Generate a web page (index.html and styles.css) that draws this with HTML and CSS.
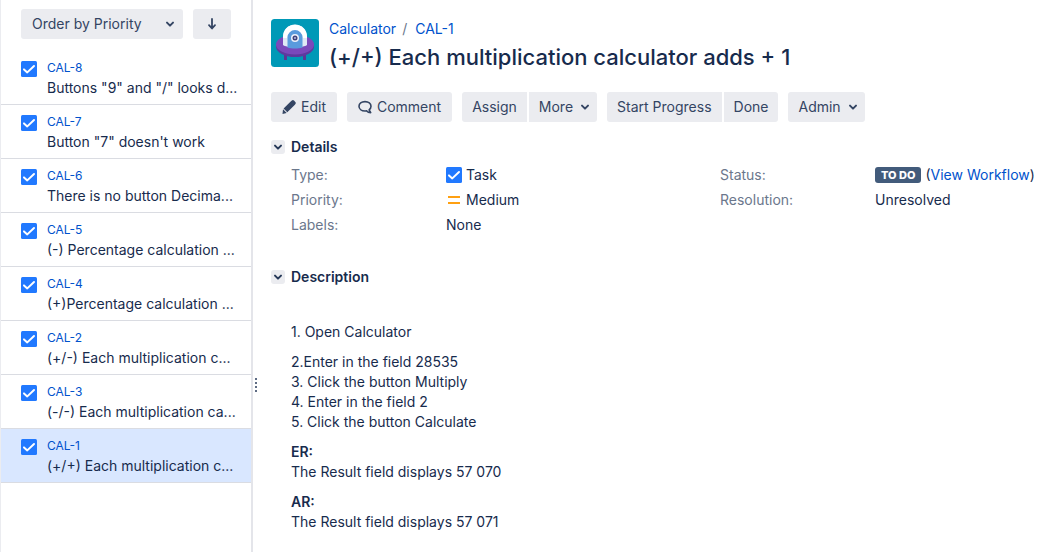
FILE: index.html
```
<!DOCTYPE html>
<html lang="en">
<head>
<meta charset="utf-8">
<title>CAL-1 (+/+) Each multiplication calculator adds + 1</title>
<link rel="stylesheet" href="styles.css">
</head>
<body>
<svg class="sprite" aria-hidden="true">
  <symbol id="task" viewBox="0 0 16 16"><rect width="16" height="16" rx="1.5" fill="#2179ff"/><path d="M3 8.400l3.300 3L13 5" fill="none" stroke="#fff" stroke-width="2" stroke-linecap="round" stroke-linejoin="round"/></symbol>
  <symbol id="chevron" viewBox="0 0 10 10"><path d="M2 3.600l3 3 3-3" fill="none" stroke="currentColor" stroke-width="2" stroke-linecap="round" stroke-linejoin="round"/></symbol>
</svg>
<div class="layout">
  <aside class="sidebar">
    <div class="order">
      <button class="btn order-by">Order by Priority<svg class="chevron"><use href="#chevron"/></svg></button>
      <button class="btn order-dir" aria-label="Sort descending"><svg class="arrow" viewBox="0 0 12 12"><path d="M6 1v9M3 7.200l3 3.300 3-3.300" fill="none" stroke="currentColor" stroke-width="1.800" stroke-linecap="round" stroke-linejoin="round"/></svg></button>
    </div>
    <ul class="issues">
      <li class="issue"><svg class="task"><use href="#task"/></svg><div class="issue-text"><a class="key" href="#">CAL-8</a><span class="summary">Buttons "9" and "/" looks d...</span></div></li>
      <li class="issue"><svg class="task"><use href="#task"/></svg><div class="issue-text"><a class="key" href="#">CAL-7</a><span class="summary">Button "7" doesn't work</span></div></li>
      <li class="issue"><svg class="task"><use href="#task"/></svg><div class="issue-text"><a class="key" href="#">CAL-6</a><span class="summary">There is no button Decima...</span></div></li>
      <li class="issue"><svg class="task"><use href="#task"/></svg><div class="issue-text"><a class="key" href="#">CAL-5</a><span class="summary">(-) Percentage calculation ...</span></div></li>
      <li class="issue"><svg class="task"><use href="#task"/></svg><div class="issue-text"><a class="key" href="#">CAL-4</a><span class="summary">(+)Percentage calculation ...</span></div></li>
      <li class="issue"><svg class="task"><use href="#task"/></svg><div class="issue-text"><a class="key" href="#">CAL-2</a><span class="summary">(+/-) Each multiplication c...</span></div></li>
      <li class="issue"><svg class="task"><use href="#task"/></svg><div class="issue-text"><a class="key" href="#">CAL-3</a><span class="summary">(-/-) Each multiplication ca...</span></div></li>
      <li class="issue selected"><svg class="task"><use href="#task"/></svg><div class="issue-text"><a class="key" href="#">CAL-1</a><span class="summary">(+/+) Each multiplication c...</span></div></li>
    </ul>
    <div class="grip"><i></i><i></i><i></i><i></i></div>
  </aside>
  <main class="main">
    <header class="header">
      <svg class="avatar" viewBox="0 0 48 48" aria-hidden="true">
        <rect width="48" height="48" rx="3.500" fill="#0099b7"/>
        <path d="M13 34h3v7h-3zM32 34h3v7h-3z" fill="#5a3696"/>
        <ellipse cx="24" cy="27.500" rx="19" ry="10.500" fill="#5e3a9e"/>
        <ellipse cx="24" cy="25.500" rx="19" ry="10" fill="#7a49bb"/>
        <path d="M12 26V17.500a12 12 0 0 1 24 0V26c-3 3-21 3-24 0z" fill="#dfe9f5"/>
        <path d="M13 13a12 12 0 0 1 22 0c1 3 1 5 1 6h-4c-1-9-15-9-16 0h-4c0-1 0-3 1-6z" fill="#fff"/>
        <path d="M16.500 28.500V18.500a7.500 7.500 0 0 1 15 0v10c-4 1.300-11 1.300-15 0z" fill="#5a9bdd"/>
        <circle cx="24" cy="19" r="4" fill="#eef2fb"/><circle cx="24" cy="19" r="2.500" fill="#42437a"/><circle cx="24" cy="19" r="1" fill="#b3bde0"/>
      </svg>
      <div class="titles">
        <nav class="crumbs"><a href="#">Calculator</a><span class="slash">/</span><a href="#">CAL-1</a></nav>
        <h1>(+/+) Each multiplication calculator adds + 1</h1>
      </div>
    </header>
    <div class="toolbar">
      <button class="btn with-icon"><svg class="icon" viewBox="0 0 14 14"><path d="M9.200 1l.7-.5a1.600 1.600 0 0 1 2.100.1l1.300 1.300a1.600 1.600 0 0 1 .1 2.100l-.5.700-7.600 7.600-3.700-3.700zM1 9.300l3.700 3.700-4.200 1z" fill="currentColor"/></svg>Edit</button>
      <button class="btn with-icon"><svg class="icon" viewBox="0 0 14 14"><path d="M7 1.600c3.500 0 6 2 6 4.700 0 1.500-.7 2.700-1.900 3.500l1.600 2.800c-1.900 0-3.100-.6-4-1.700A9 9 0 0 1 7 11c-3.500 0-6-2-6-4.700s2.500-4.700 6-4.700z" fill="none" stroke="currentColor" stroke-width="1.600" stroke-linejoin="round"/></svg>Comment</button>
      <div class="group"><button class="btn">Assign</button><button class="btn">More<svg class="chevron"><use href="#chevron"/></svg></button></div>
      <div class="group"><button class="btn">Start Progress</button><button class="btn">Done</button></div>
      <button class="btn">Admin<svg class="chevron"><use href="#chevron"/></svg></button>
    </div>
    <section class="details">
      <h2><button class="toggle" aria-label="Toggle details"><svg class="chevron"><use href="#chevron"/></svg></button>Details</h2>
      <dl class="fields">
        <dt>Type:</dt><dd><svg class="task"><use href="#task"/></svg>Task</dd>
        <dt>Status:</dt><dd><span class="lozenge">TO DO</span><span>(<a href="#">View Workflow</a>)</span></dd>
        <dt>Priority:</dt><dd><svg class="task" viewBox="0 0 16 16"><path d="M2 4h12v2H2zM2 10h12v2H2z" fill="#ffa011"/></svg>Medium</dd>
        <dt>Resolution:</dt><dd>Unresolved</dd>
        <dt>Labels:</dt><dd>None</dd>
      </dl>
    </section>
    <section class="description">
      <h2><button class="toggle" aria-label="Toggle description"><svg class="chevron"><use href="#chevron"/></svg></button>Description</h2>
      <div class="text">
        <p>1. Open Calculator</p>
        <p>2.Enter in the field 28535<br>3. Click the button Multiply<br>4. Enter in the field 2<br>5. Click the button Calculate</p>
        <p><b>ER:</b><br>The Result field displays 57 070</p>
        <p><b>AR:</b><br>The Result field displays 57 071</p>
      </div>
    </section>
  </main>
</div>
</body>
</html>
```
FILE: styles.css
```
* { box-sizing: border-box; }
body {
  margin: 0;
  background: #fff;
  color: #172b4d;
  font: 14px/20px Inter, "Liberation Sans", sans-serif;
}
a { color: #0052cc; text-decoration: none; }
h1, h2, p, ul, dl, dd { margin: 0; padding: 0; }
svg { flex: none; }
.sprite { position: absolute; width: 0; height: 0; }
.layout { display: flex; min-height: 100vh; }

.sidebar {
  position: relative;
  flex: none;
  width: 253px;
  border-left: 1px solid #ebecf0;
  border-right: 2px solid #e4e5ea;
}
.order { display: flex; gap: 10px; padding: 9px 20px 12px; }
.btn {
  display: flex;
  align-items: center;
  justify-content: center;
  gap: 6px;
  height: 30px;
  padding: 0 10px;
  border: 0;
  border-radius: 3px;
  background: #ebecf0;
  color: #344563;
  font: inherit;
  white-space: nowrap;
}
.order-by { flex: 1; justify-content: space-between; padding: 0 8px 0 11px; }
.order-dir { width: 38px; }
.with-icon { gap: 5px; padding: 0 11px; }
.chevron { width: 10px; height: 10px; }
.arrow { width: 12px; height: 12px; }
.task { width: 16px; height: 16px; }
.issues { list-style: none; }
.issue {
  display: flex;
  gap: 10px;
  padding: 7px 12px 6px 20px;
  border-bottom: 1px solid #dadce2;
}
.issue .task { margin-top: 3px; }
.selected { background: #d9e7ff; }
.issue-text { display: flex; flex-direction: column; min-width: 0; }
.key { font-size: 12px; }
.summary { white-space: nowrap; }
.grip {
  position: absolute;
  top: 378px;
  right: -6px;
  display: grid;
  gap: 2px;
}
.grip i { width: 2px; height: 2px; background: #5e6c84; }

.main { flex: 1; min-width: 0; padding: 19px 6px 20px 18px; }
.header { display: flex; gap: 10px; }
.avatar { width: 48px; height: 48px; }
.crumbs { display: flex; }
.slash { padding: 0 8px 0 6px; color: #6b778c; }
h1 { margin-top: 4px; font-size: 22px; line-height: 28px; font-weight: 500; }
.toolbar { display: flex; flex-wrap: wrap; gap: 10px; margin-top: 21px; }
.icon { width: 14px; height: 14px; }
.group { display: flex; gap: 2px; }
.group .btn:first-child { border-radius: 3px 0 0 3px; }
.group .btn:last-child { border-radius: 0 3px 3px 0; }
.toolbar .chevron { margin: 0 -3px 0 1px; }

h2 { display: flex; align-items: center; gap: 6px; font-size: 14px; line-height: 20px; font-weight: 600; }
.toggle {
  display: grid;
  place-items: center;
  width: 14px;
  height: 14px;
  padding: 0;
  border: 0;
  border-radius: 3px;
  background: #ebecf0;
  color: #253858;
}
.details { margin-top: 15px; }
.fields {
  display: grid;
  grid-template-columns: 155px 274fr 155px 163fr;
  row-gap: 5px;
  padding: 8px 0 0 20px;
}
dt { color: #6b778c; }
dd { display: flex; align-items: center; gap: 4px; white-space: nowrap; }
.lozenge {
  padding: 0 6px;
  border-radius: 3px;
  background: #425b7b;
  color: #fff;
  font-size: 11px;
  line-height: 16px;
  font-weight: 800;
}
.description { margin-top: 32px; }
.text { display: grid; gap: 10px; padding: 35px 0 0 20px; }
b { font-weight: 600; }
```
